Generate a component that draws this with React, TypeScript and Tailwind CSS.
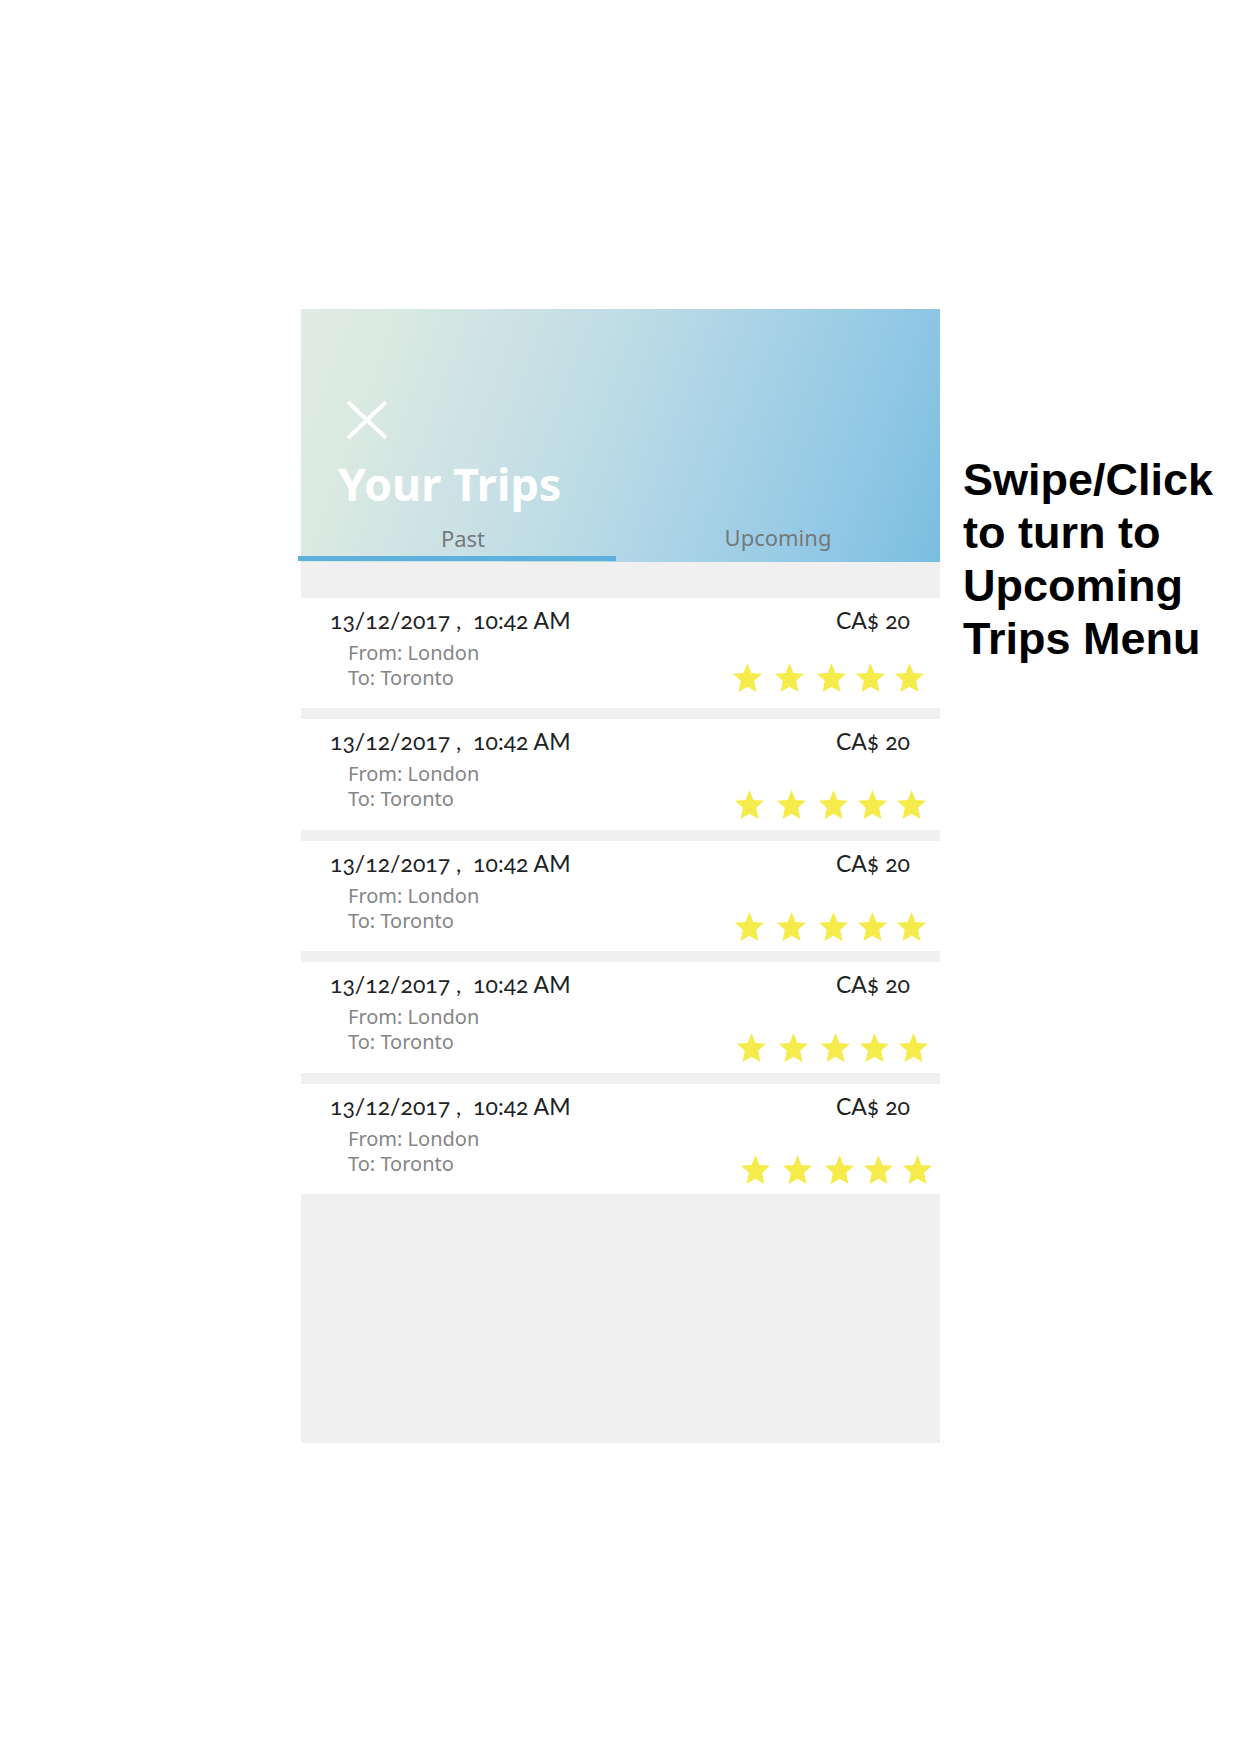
type Trip = {
  id: number;
  date: string;
  price: string;
  from: string;
  to: string;
  starsClass: string;
};

const base = { date: "13/12/2017 ,\u00a0 10:42 AM", price: "CA$ 20", from: "London", to: "Toronto" };

const trips: Trip[] = [
  { id: 1, ...base, starsClass: "pt-1 pr-4" },
  { id: 2, ...base, starsClass: "pt-[10px] pr-3.5" },
  { id: 3, ...base, starsClass: "pt-[10px] pr-3.5" },
  { id: 4, ...base, starsClass: "pt-[10px] pr-3" },
  { id: 5, ...base, starsClass: "pt-[10px] pr-2" },
];

function Star() {
  return (
    <svg viewBox="0 0 29 29" className="size-[29px] fill-[#f5ec4b]" aria-hidden="true">
      <path d="M14.5 0 L18.4 9.9 L29 10.7 L21.2 17.8 L23.4 29 L14.5 23.8 L5.6 29 L7.8 17.8 L0 10.7 L10.6 9.9 Z" />
    </svg>
  );
}

function TripRow({ trip }: { trip: Trip }) {
  return (
    <li className="flex flex-1 justify-between bg-white">
      <div className="pt-1.5 pl-[29px]">
        <p className="font-['Lato'] text-[23px] leading-8 whitespace-nowrap text-[#222] oldstyle-nums">{trip.date}</p>
        <div className="mt-1 pl-[18px] font-['Noto_Sans'] text-[20px] leading-[25px] text-[#858585]">
          <p>From: {trip.from}</p>
          <p>To: {trip.to}</p>
        </div>
      </div>
      <div className="flex flex-col items-end pt-1.5">
        <p className="pr-[30px] font-['Lato'] text-[23px] leading-8 text-[#222] oldstyle-nums">{trip.price}</p>
        <div className={"mt-[23px] flex " + trip.starsClass} role="img" aria-label="5 out of 5 stars">
          <div className="flex gap-[13px] pr-[10px]">
            <Star />
            <Star />
            <Star />
          </div>
          <div className="flex gap-[10px]">
            <Star />
            <Star />
          </div>
        </div>
      </div>
    </li>
  );
}

export default function App() {
  return (
    <main className="grid min-h-screen grid-cols-[301fr_639fr_300fr] items-start bg-white pt-[309px] font-['Noto_Sans',sans-serif]">
      <section className="col-start-2 bg-[#f0f0f0] pb-[249px]">
        <header className="bg-[linear-gradient(110deg,#dfece3_0%,#dbeae1_12%,#cbe1e5_32%,#bbdce5_48%,#b1d6e7_57%,#a0cfe5_71%,#90c7e5_85%,#7abee0_100%)] pt-[91px]">
          <button type="button" aria-label="Close" className="ml-[45px] block">
            <svg viewBox="0 0 42 40" className="h-10 w-[42px] stroke-white" strokeWidth="4" fill="none">
              <path d="M2 2 L40 38 M40 2 L2 38" />
            </svg>
          </button>
          <h1 className="mt-3.5 pl-[37px] font-['Noto_Sans'] text-[45px] leading-[60px] font-bold text-white">
            Your Trips
          </h1>
          <nav className="-ml-[3px] flex font-['Noto_Sans'] text-[22px] leading-8 text-[#74797c]">
            <button type="button" className="w-1/2 max-w-[318px] border-b-[5px] border-[#5eb1dc] pt-2 pb-0.5 pl-3">
              Past
            </button>
            <button type="button" className="flex-1 pt-1.5 pb-2">
              Upcoming
            </button>
          </nav>
          <div className="h-px" />
        </header>
        <ul className="mt-9 flex h-[596px] flex-col gap-[11px]">
          {trips.map((trip) => (
            <TripRow key={trip.id} trip={trip} />
          ))}
        </ul>
      </section>
      <aside className="mt-36 pl-[23px] font-['Liberation_Sans'] text-[45px] leading-[53px] font-bold text-black">
        Swipe/Click to turn to Upcoming Trips Menu
      </aside>
    </main>
  );
}
